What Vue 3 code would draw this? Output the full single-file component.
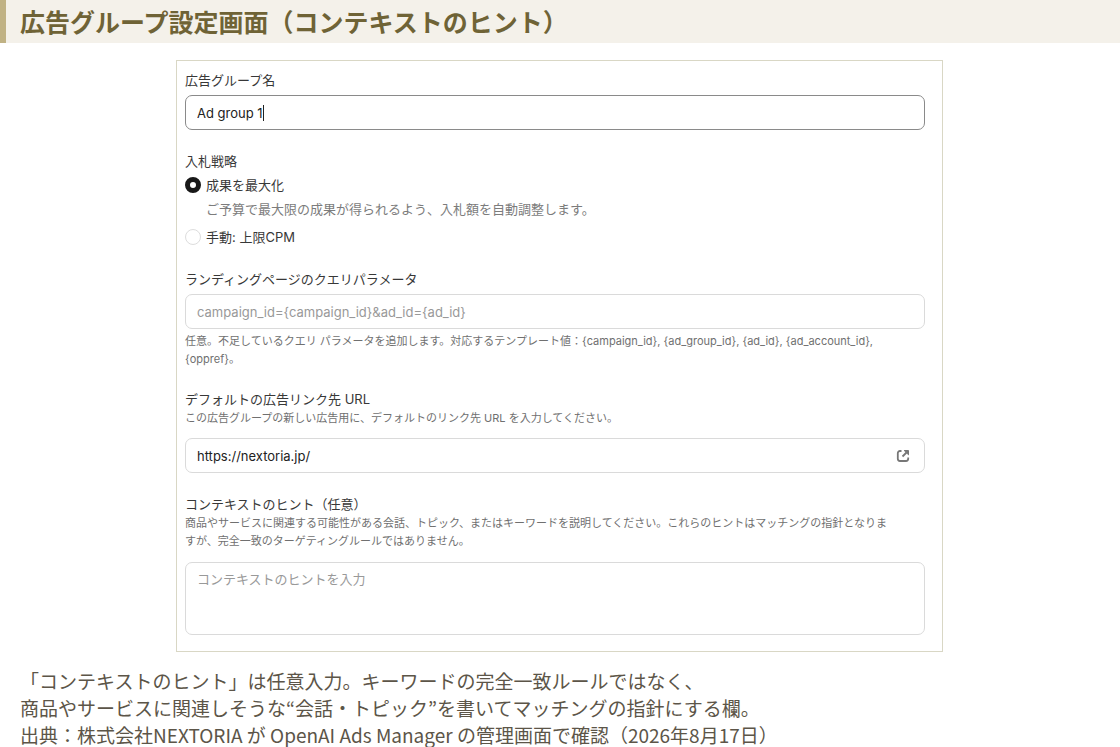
<script setup>
import { ref } from 'vue'

const groupName = ref('Ad group 1')
const strategy = ref('max')
const query = ref('')
const url = ref('https://nextoria.jp/')
const hint = ref('')
</script>

<template>
  <main class="slide">
    <h1 class="title">広告グループ設定画面（コンテキストのヒント）</h1>

    <form class="panel" @submit.prevent>
      <section class="field">
        <label class="label" for="group-name">広告グループ名</label>
        <div class="control focused">
          <input id="group-name" v-model="groupName" class="name-input" type="text" />
          <span class="caret" aria-hidden="true"></span>
        </div>
      </section>

      <fieldset class="field strategy">
        <legend class="label">入札戦略</legend>
        <label class="option">
          <input v-model="strategy" type="radio" name="strategy" value="max" />
          <span>成果を最大化</span>
        </label>
        <p class="option-note">ご予算で最大限の成果が得られるよう、入札額を自動調整します。</p>
        <label class="option">
          <input v-model="strategy" type="radio" name="strategy" value="manual" />
          <span>手動: 上限CPM</span>
        </label>
      </fieldset>

      <section class="field">
        <label class="label" for="query">ランディングページのクエリパラメータ</label>
        <div class="control">
          <input id="query" v-model="query" type="text" placeholder="campaign_id={campaign_id}&amp;ad_id={ad_id}" />
        </div>
        <p class="note after">任意。不足しているクエリ パラメータを追加します。対応するテンプレート値：{campaign_id}, {ad_group_id}, {ad_id}, {ad_account_id}, {oppref}。</p>
      </section>

      <section class="field">
        <label class="label" for="url">デフォルトの広告リンク先 URL</label>
        <p class="note before">この広告グループの新しい広告用に、デフォルトのリンク先 URL を入力してください。</p>
        <div class="control">
          <input id="url" v-model="url" type="text" />
          <a class="open" :href="url" aria-label="リンクを開く">
            <svg viewBox="0 0 14 14" width="14" height="14" fill="none" stroke="currentColor" stroke-width="1.8" stroke-linejoin="round">
              <path d="M5.500 2H4A2.200 2.200 0 0 0 1.800 4.200v5.600A2.200 2.200 0 0 0 4 12h6a2.200 2.200 0 0 0 2.200-2.200V8.500M6.500 7.500l4-4" />
              <path d="M8.200 1.500h4.300v4.300z" fill="currentColor" stroke-width="1" />
            </svg>
          </a>
        </div>
      </section>

      <section class="field">
        <label class="label" for="hint">コンテキストのヒント（任意）</label>
        <p class="note before">商品やサービスに関連する可能性がある会話、トピック、またはキーワードを説明してください。これらのヒントはマッチングの指針となりますが、完全一致のターゲティングルールではありません。</p>
        <textarea id="hint" v-model="hint" placeholder="コンテキストのヒントを入力"></textarea>
      </section>
    </form>

    <p class="caption">
      「コンテキストのヒント」は任意入力。キーワードの完全一致ルールではなく、<br />
      商品やサービスに関連しそうな“会話・トピック”を書いてマッチングの指針にする欄。<br />
      出典：株式会社NEXTORIA が OpenAI Ads Manager の管理画面で確認（2026年8月17日）
    </p>
  </main>
</template>

<style>
body {
  margin: 0;
  background: #fff;
  overflow: hidden;
}
</style>

<style scoped>
* {
  box-sizing: border-box;
}
.slide {
  font-family: "Noto Sans CJK JP", sans-serif;
}
.title {
  margin: 0;
  height: 43px;
  padding-left: 14px;
  border-left: 6px solid #c0b284;
  background: #f4f1ea;
  color: #6f6336;
  font-size: 25px;
  line-height: 43px;
  font-weight: 700;
}
.panel {
  margin: 17px 177px 0 176px;
  padding: 11px 17px 16px 8px;
  border: 1px solid #d9d7c5;
  color: #383838;
  font-family: Inter, "Noto Sans CJK JP", sans-serif;
  font-size: 13px;
}
.field {
  margin: 0 0 23px;
  padding: 0;
  border: 0;
  min-width: 0;
}
.strategy {
  margin-bottom: 24px;
}
.field:last-child {
  margin-bottom: 0;
}
.label {
  display: block;
  padding: 0;
  font-size: 13px;
  line-height: 17px;
}
.control {
  display: flex;
  align-items: center;
  height: 35px;
  margin-top: 6px;
  padding: 0 11px;
  border: 1px solid #dadada;
  border-radius: 7px;
}
.focused {
  border-color: #8a8a8a;
}
.control input {
  flex: 1;
  min-width: 0;
  padding: 0;
  border: 0;
  outline: 0;
  background: none;
  color: #222;
  font: inherit;
}
.control .name-input {
  flex: none;
  field-sizing: content;
}
.caret {
  width: 1px;
  height: 16px;
  background: #222;
}
input::placeholder,
textarea::placeholder {
  color: #999;
  opacity: 1;
}
.option {
  display: flex;
  align-items: center;
  gap: 5px;
  height: 20px;
  margin-top: 5px;
}
.option span {
  padding-bottom: 2px;
}
.option input {
  appearance: none;
  width: 16px;
  height: 16px;
  margin: 0;
  border: 1px solid #ddd;
  border-radius: 50%;
}
.option input:checked {
  border: 5px solid #181818;
}
.option-note {
  margin: 5px 0 9px 21px;
  color: #7c7c7c;
  font-size: 13px;
  line-height: 18px;
}
.note {
  margin: 0;
  padding-right: 28px;
  color: #707070;
  font-size: 11px;
  line-height: 18px;
}
.after {
  margin-top: 3px;
}
.before {
  margin-top: 1px;
}
.before + .control {
  margin-top: 11px;
}
.before + textarea {
  margin-top: 12px;
}
.open {
  display: flex;
  margin-right: 3px;
  color: #777;
}
textarea {
  display: block;
  width: 100%;
  height: 73px;
  padding: 6px 11px;
  border: 1px solid #dadada;
  border-radius: 7px;
  outline: 0;
  resize: none;
  color: #222;
  font: inherit;
}
.caption {
  margin: 15px 20px 0;
  color: #5c5548;
  font-size: 19px;
  line-height: 27px;
}
</style>
